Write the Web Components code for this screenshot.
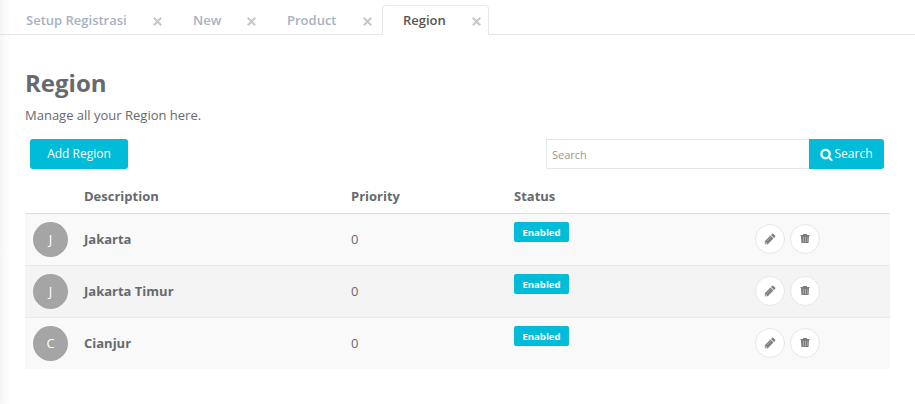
<!DOCTYPE html>
<html lang="en">
<head>
<meta charset="utf-8">
<title>Region</title>
<style>
html,body{margin:0;height:100%;overflow:hidden;background:#fff}
body{font-family:"Open Sans",sans-serif;font-size:13px;line-height:20px;color:#676a6c}
</style>
</head>
<body>
<region-page>
  <tab-strip slot="tabs">
    <tab-item style="--w:165px">Setup Registrasi</tab-item>
    <tab-item style="--w:92px">New</tab-item>
    <tab-item style="--w:114px">Product</tab-item>
    <tab-item active style="--w:107px">Region</tab-item>
  </tab-strip>
  <page-heading>Region<span slot="sub">Manage all your Region here.</span></page-heading>
  <tool-bar></tool-bar>
  <region-table>
    <region-row initial="J" priority="0">Jakarta</region-row>
    <region-row initial="J" priority="0" alt>Jakarta Timur</region-row>
    <region-row initial="C" priority="0">Cianjur</region-row>
  </region-table>
</region-page>
<script>
const define = (name, html) => {
  const t = document.createElement('template');
  t.innerHTML = html;
  customElements.define(name, class extends HTMLElement {
    constructor() {
      super();
      this.attachShadow({mode: 'open'}).append(t.content.cloneNode(true));
    }
    connectedCallback() {
      for (const el of this.shadowRoot.querySelectorAll('[data-attr]'))
        el.textContent = this.getAttribute(el.dataset.attr);
    }
  });
};

const searchIcon = '<svg width="13" height="13" viewBox="0 0 1792 1792" fill="currentColor" stroke="currentColor" stroke-width="50"><path d="M1216 832q0-185-131.5-316.5t-316.5-131.5-316.5 131.5-131.5 316.5 131.5 316.5 316.5 131.5 316.5-131.5 131.5-316.5zm512 832q0 52-38 90t-90 38q-54 0-90-38l-343-342q-179 124-399 124-143 0-273.5-55.5t-225-150-150-225-55.5-273.5 55.5-273.5 150-225 225-150 273.5-55.5 273.5 55.5 225 150 150 225 55.5 273.5q0 220-124 399l343 343q37 37 37 90z"/></svg>';
const pencilIcon = '<svg width="12" height="12" viewBox="0 0 12 12"><path fill="#808080" d="M.8 11.2V8.200L6.400 2.600l3 3L3.800 11.200zM7 2l1.100-1.100q.7-.6 1.400 0l1.600 1.600q.6.700 0 1.400L10 5z"/><path fill="none" stroke="#aaa" stroke-width=".8" d="M3 8.100l4-4"/><path fill="#e0e0e0" d="M1.700 8.900l1.400 1.400-.5.500H1.500V9.100z"/></svg>';
const trashIcon = '<svg width="10" height="10" viewBox="0 0 10 10"><path fill="#7d7d7d" d="M3 0h4v1h2.500v1H9l-.4 7H1.400L1 2H.5V1H3z"/><path fill="#aaa" d="M3 3h1v5H3zM5 3h1v5H5zM7 3h.7v5H7z"/></svg>';

define('region-page', `<style>
:host{display:block;height:404px;background:linear-gradient(90deg,#f5f5f5 0,#fafafa 4px,#fff 11px)}
main{padding:0 25px}
</style><slot name="tabs"></slot><main><slot></slot></main>`);

define('tab-strip', `<style>
:host{display:flex;gap:2px;height:35px;box-sizing:border-box;padding:5px 0 0 5px;box-shadow:inset 0 -1px #e4e4e5}
</style><slot></slot>`);

define('tab-item', `<style>
:host{display:flex;align-items:center;justify-content:space-between;box-sizing:border-box;width:var(--w);height:30px;padding:0 7px 2px 20px;border:1px solid transparent;border-bottom:0;border-radius:4px 4px 0 0;color:#a7b1c2;font-weight:600;white-space:nowrap}
:host([active]){background:#fff;border-color:#e7eaec;color:#555}
svg{margin-top:3px}
</style><slot></slot><svg width="9" height="9" viewBox="0 0 9 9" stroke="#c8c8c8" stroke-width="2.1"><path d="M.8.8l7.4 7.4M8.200.8L.8 8.200"/></svg>`);

define('page-heading', `<style>
:host{display:block}
h2{margin:0;padding-top:32px;font-size:24px;line-height:32px;font-weight:700}
p{margin:6px 0 0;line-height:20px}
</style><h2><slot></slot></h2><p><slot name="sub"></slot></p>`);

define('tool-bar', `<style>
:host{display:flex;justify-content:space-between;padding:14px 6px 0 5px}
button{height:30px;border:0;padding:0;background:#00bcd8;color:#fff;font:12px/30px "Open Sans",sans-serif;display:flex;align-items:center;justify-content:center}
.add{width:98px;border-radius:3px}
.find{display:flex}
input{box-sizing:border-box;width:263px;height:30px;margin:0;border:1px solid #e5e6e7;border-right:0;padding:1px 5px;font:11px "Open Sans",sans-serif;border-radius:1px 0 0 1px}
input::placeholder{color:#999}
.go{width:75px;border-radius:0 3px 3px 0;gap:2px;padding-right:1px}
</style><button class="add">Add Region</button><div class="find"><input placeholder="Search"><button class="go">${searchIcon}<span>Search</span></button></div>`);

define('region-table', `<style>
:host{display:block;margin-top:10px}
header{display:grid;grid-template-columns:51px 267px 163px 1fr;height:34px;line-height:35px;padding-left:8px;border-bottom:1px solid #ddd;font-weight:700}
</style><header><span></span><span>Description</span><span>Priority</span><span>Status</span></header><slot></slot>`);

define('region-row', `<style>
:host{display:grid;grid-template-columns:51px 267px 163px 241px 1fr;align-items:center;height:51px;background:#f9f9f9;padding-left:8px}
:host([alt]){background:#f4f4f4;border:solid #e7eaec;border-width:1px 0}
.avatar{width:35px;height:35px;border-radius:50%;background:#a5a5a5;color:#fff;text-align:center;line-height:35px}
b,.num{line-height:20px;padding-bottom:1px}
b{font-weight:700}
.badge{align-self:start;justify-self:start;margin-top:8px;width:55px;height:20px;border-radius:2px;background:#00bcd8;color:#fff;font-size:9.6px;font-weight:700;line-height:21px;text-align:center}
.acts{display:flex;gap:5px;padding-bottom:1px}
.act{box-sizing:border-box;width:30px;height:30px;border:1px solid #e7e7e7;border-radius:50%;background:#fff;display:flex;align-items:center;justify-content:center}
</style><span class="avatar" data-attr="initial"></span><b><slot></slot></b><span class="num" data-attr="priority"></span><span class="badge">Enabled</span><div class="acts"><span class="act">${pencilIcon}</span><span class="act">${trashIcon}</span></div>`);
</script>
</body>
</html>
